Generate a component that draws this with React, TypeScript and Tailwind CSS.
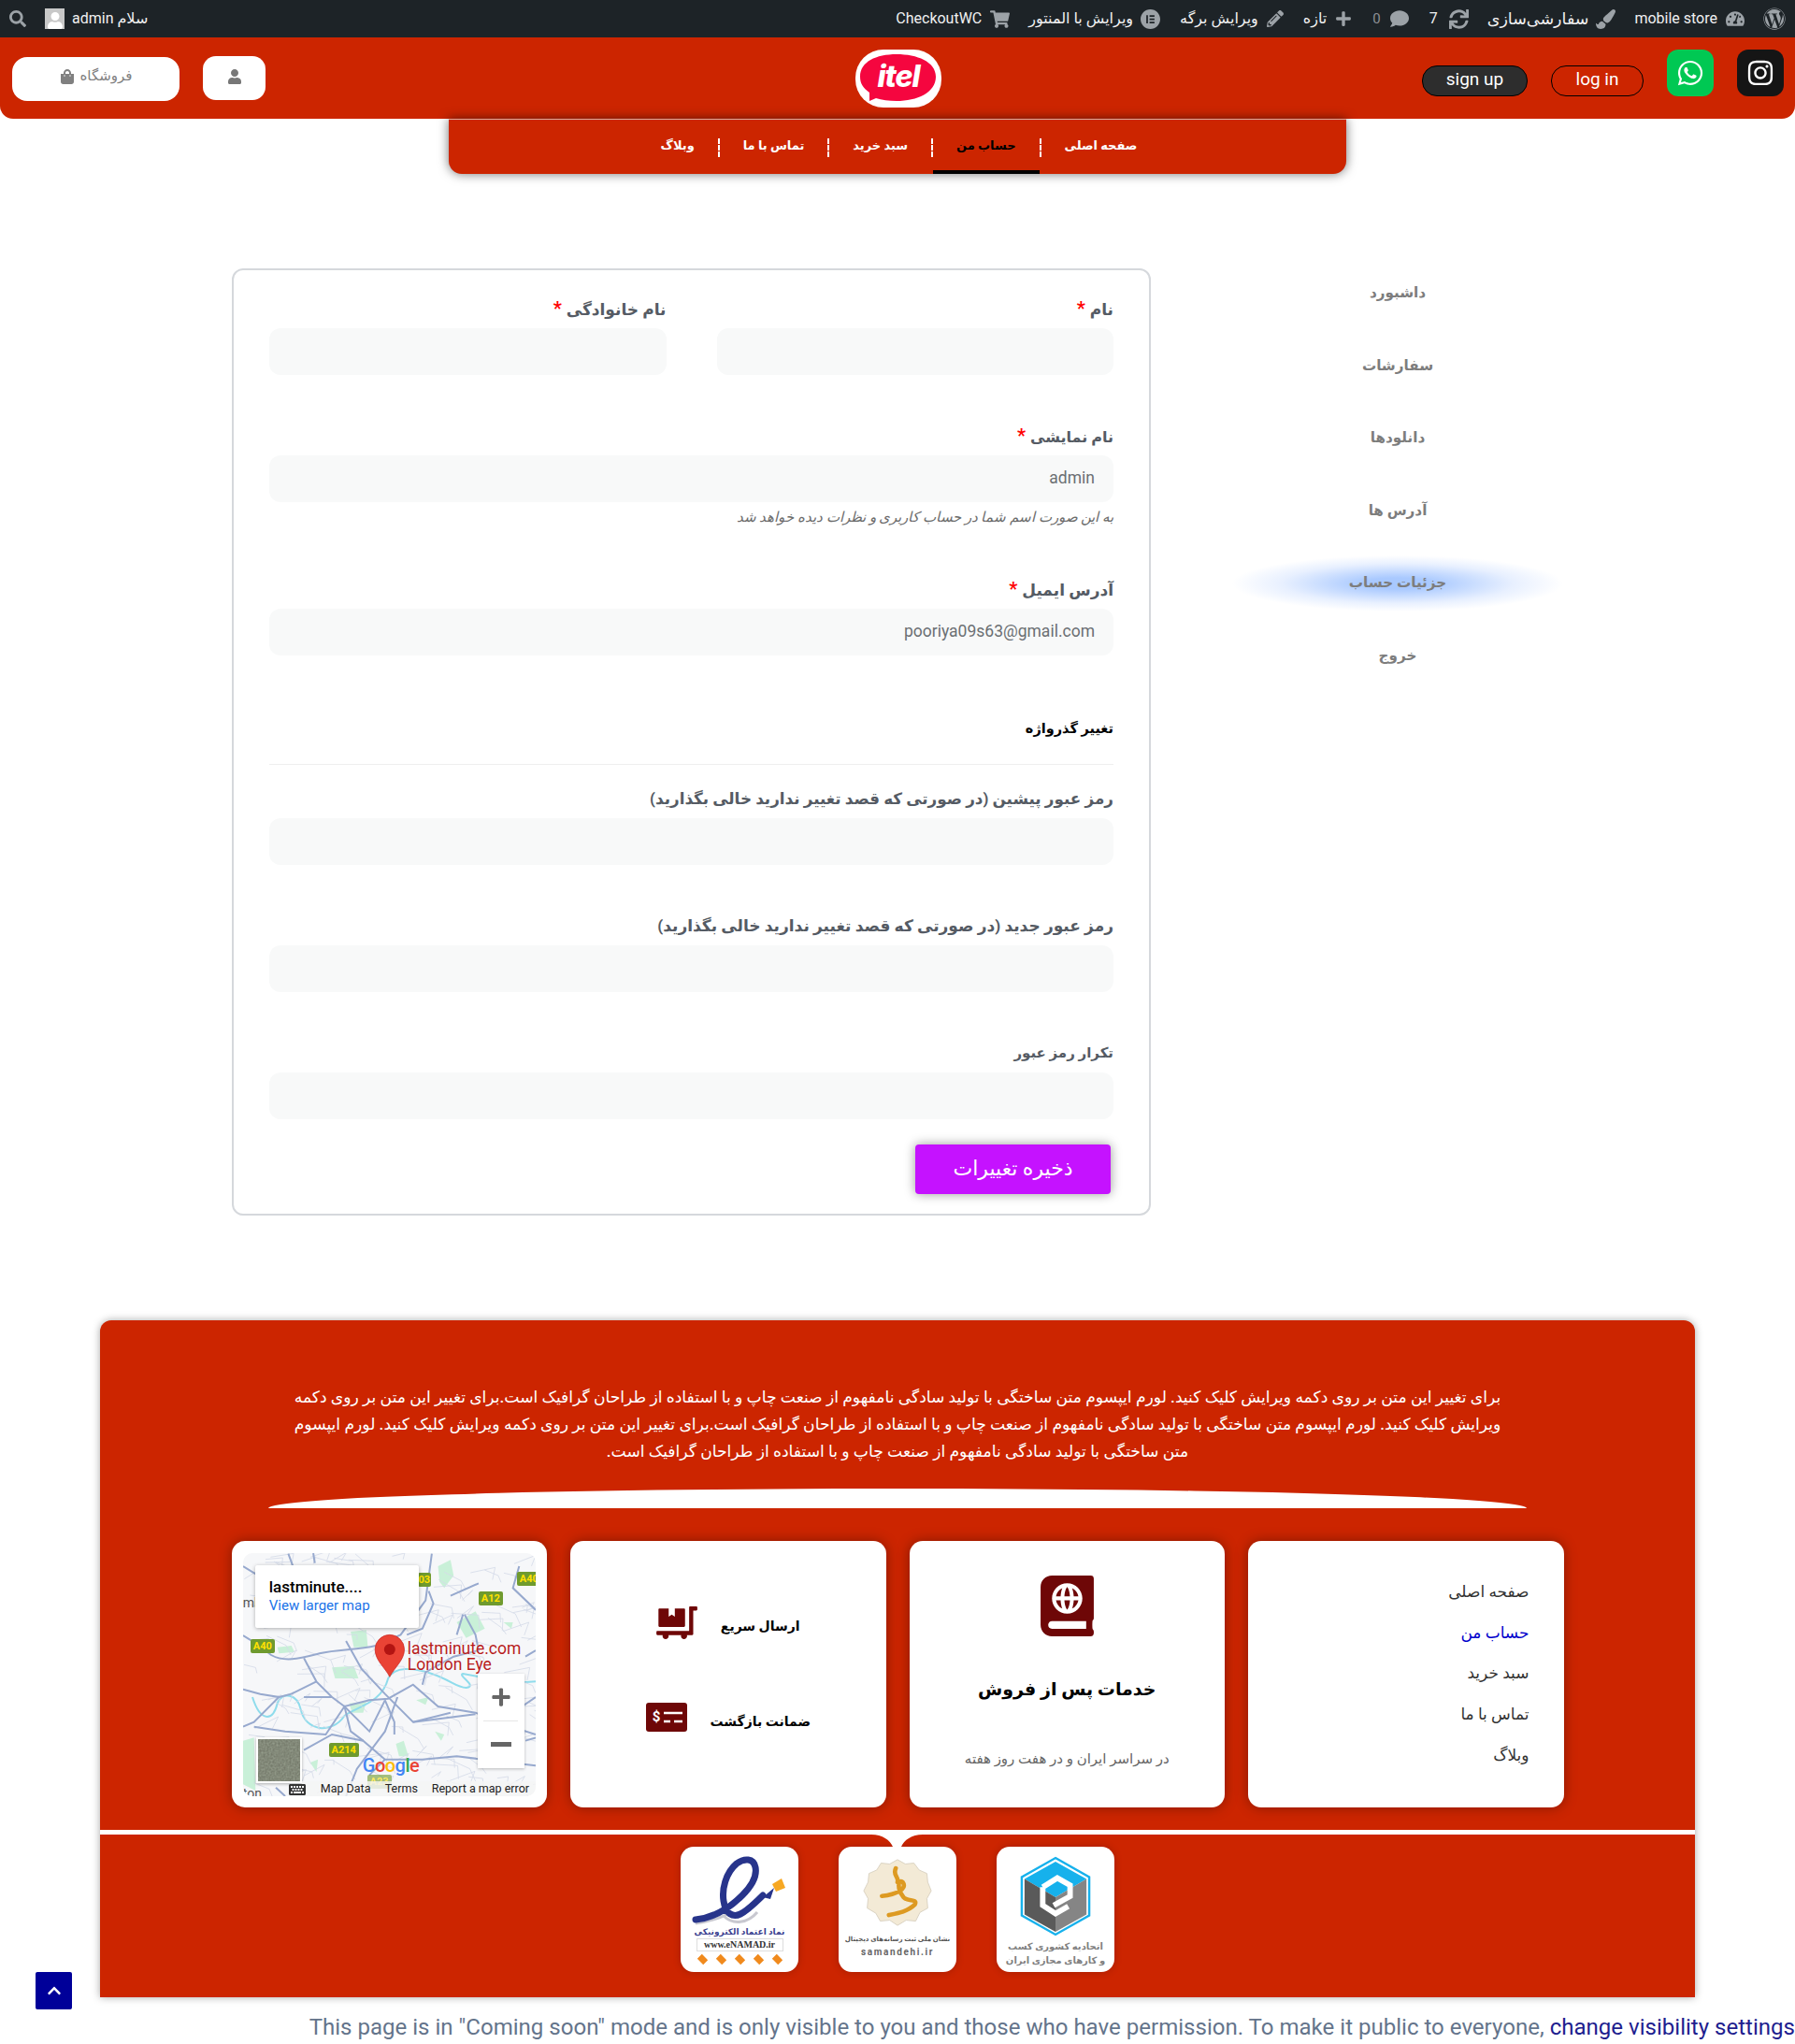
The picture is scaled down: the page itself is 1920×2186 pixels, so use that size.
import React from "react";
import { FaWordpress, FaTachometerAlt, FaPaintBrush, FaSync, FaComment, FaPlus, FaPencilAlt, FaShoppingCart, FaSearch, FaWhatsapp, FaInstagram, FaShoppingBag, FaUser, FaAtlas, FaDollyFlatbed, FaKeyboard, FaChevronUp } from "react-icons/fa";
import { SiElementor } from "react-icons/si";

const FONT = "font-['Roboto','DejaVu_Sans',sans-serif]";

function AdminItem({ icon, text, cls = "" }: { icon: React.ReactNode; text?: string; cls?: string }) {
  return (
    <div className={"flex items-center gap-[9px] text-[16px] text-[#f0f0f1] " + cls}>
      {text && <span className="whitespace-nowrap">{text}</span>}
      <span className="text-[#9ca2a7] flex items-center">{icon}</span>
    </div>
  );
}

function AdminBar() {
  return (
    <div className="h-10 bg-[#1d2327] flex items-center justify-between pl-[10px] pr-[10px]">
      <div className="flex items-center">
        <FaSearch className="text-[#9ca2a7] text-[18px]" />
        <div className="ml-[20px] w-[21px] h-[22px] bg-[#c8c8c8] flex items-end justify-center overflow-hidden">
          <FaUser className="text-white text-[18px]" />
        </div>
        <span className="ml-[8px] text-[16px] text-[#f0f0f1] whitespace-nowrap" dir="rtl">سلام admin</span>
      </div>
      <div className="flex items-center">
        <AdminItem text="CheckoutWC" icon={<FaShoppingCart className="text-[21px]" />} />
        <div className="ml-[20px] flex items-center gap-[8px] text-[16px] text-[#f0f0f1]">
          <span className="whitespace-nowrap" dir="rtl">ویرایش با المنتور</span>
          <SiElementor className="text-[#9ca2a7] text-[21px]" />
        </div>
        <AdminItem cls="ml-[21px]" text="ویرایش برگه" icon={<FaPencilAlt className="text-[18px]" />} />
        <AdminItem cls="ml-[21px]" text="تازه" icon={<FaPlus className="text-[18px]" />} />
        <div className="ml-[22px] flex items-center gap-[10px] text-[15px] text-[#8c8f94]">
          <span>0</span>
          <FaComment className="text-[#9ca2a7] text-[20px]" />
        </div>
        <div className="ml-[22px] flex items-center gap-[12px] text-[16px] text-[#f0f0f1]">
          <span>7</span>
          <FaSync className="text-[#9ca2a7] text-[21px]" />
        </div>
        <div className="ml-[20px] flex items-center gap-[8px] text-[17.5px] text-[#f0f0f1]">
          <span className="whitespace-nowrap">سفارشی‌سازی</span>
          <FaPaintBrush className="text-[#9ca2a7] text-[21px]" />
        </div>
        <AdminItem cls="ml-[20px]" text="mobile store" icon={<FaTachometerAlt className="text-[20px]" />} />
        <FaWordpress className="ml-[20px] text-[#9ca2a7] text-[24px]" />
      </div>
    </div>
  );
}

function Logo() {
  return (
    <svg viewBox="0 0 92 62" className="w-[94px] h-[62px]">
      <rect x="0" y="0" width="92" height="62" rx="30" ry="30" fill="#fff" />
      <path d="M44 5 C66 5 86 13 86 29 C86 46 66 55 44 55 C36 55 28 54 22 52 L15 55 L15 46 C8 41 5 36 5 29 C5 13 22 5 44 5Z" fill="#f5063f" />
      <text x="46" y="40" textAnchor="middle" fontFamily="Inter, Roboto, sans-serif" fontStyle="italic" fontWeight="800" fontSize="32" fill="#fff" letterSpacing="-1">itel</text>
    </svg>
  );
}

function Header() {
  return (
    <div className="h-[87px] bg-[#cc2500] rounded-b-[14px] grid grid-cols-[1fr_auto_1fr] items-start pl-[13px] pr-[12px]">
      <div className="flex items-start">
        <div className="mt-[21px] w-[179px] h-[47px] bg-white rounded-[16px] flex items-center justify-center gap-[6px] pb-[6px] text-[15px] text-[#808080]">
          <FaShoppingBag className="text-[16px]" />
          <span dir="rtl">فروشگاه</span>
        </div>
        <div className="mt-[20px] ml-[25px] w-[67px] h-[47px] bg-white rounded-[14px] flex items-center justify-center pb-[4px] text-[#777]">
          <FaUser className="text-[16px]" />
        </div>
      </div>
      <div className="mt-[13px]">
        <Logo />
      </div>
      <div className="flex items-start justify-end">
        <div className="mt-[30px] w-[113px] h-[33px] rounded-[16px] bg-[#2d2d2d] border border-black text-white text-[19px] pb-[3px] flex items-center justify-center">sign up</div>
        <div className="mt-[30px] ml-[25px] w-[99px] h-[33px] rounded-[16px] bg-[#cc2500] border border-black text-white text-[19px] pb-[3px] flex items-center justify-center">log in</div>
        <div className="mt-[13px] ml-[25px] w-[50px] h-[50px] rounded-[12px] bg-[#00c853] flex items-center justify-center text-white">
          <FaWhatsapp className="text-[30px]" />
        </div>
        <div className="mt-[13px] ml-[25px] w-[50px] h-[50px] rounded-[12px] bg-[#151515] flex items-center justify-center text-white">
          <FaInstagram className="text-[30px]" />
        </div>
      </div>
    </div>
  );
}

function Sep() {
  return <div className="h-[20px] border-l-2 border-dashed border-white mt-[20px] mb-[19px]" />;
}

function Nav() {
  const items = ["صفحه اصلی", "حساب من", "سبد خرید", "تماس با ما", "وبلاگ"];
  return (
    <div dir="rtl" className="relative z-10 w-[960px] mx-auto h-[59px] bg-[#cc2500] rounded-b-[14px] border-t border-[#d9a89c] shadow-[0_0_12px_rgba(0,0,0,0.55)] flex justify-center pl-[3px]">
      {items.map((t, i) => (
        <React.Fragment key={t}>
          {i > 0 && <Sep />}
          <div className={"h-full px-[25px] flex items-center text-[13px] font-bold whitespace-nowrap " + (i === 1 ? "text-black border-b-4 border-black pt-[2px]" : "text-white pb-[3px]")}>{t}</div>
        </React.Fragment>
      ))}
    </div>
  );
}

function Field({ label, req, value, top, cls = "", size = "text-[17px]" }: { label: string; req?: boolean; value?: string; top: string; cls?: string; size?: string }) {
  return (
    <div className={top + " " + cls}>
      <label className={"h-[28px] block leading-[28px] font-bold text-[#555b64] whitespace-nowrap " + size}>
        {label}
        {req && <span className="text-[#ff0000] text-[20px]"> *</span>}
      </label>
      <div dir="ltr" className="mt-[7px] h-[50px] rounded-[12px] bg-[#f8f9f9] flex items-center justify-end pr-[20px] pb-[2px] text-[17.5px] text-[#6b6f73]">{value}</div>
    </div>
  );
}

function Form() {
  return (
    <div className="mt-[12px] w-[983px] h-[1013px] border-2 border-[#d5d8dc] rounded-[12px] px-[38px] pt-[27px]">
      <div className="flex gap-[54px]">
        <Field label="نام" req top="" cls="w-[425px]" />
        <Field label="نام خانوادگی" req top="" cls="w-[425px]" />
      </div>
      <Field label="نام نمایشی" req value="admin" top="mt-[51px]" size="text-[16px]" />
      <div className="mt-[6px] h-[20px] leading-[20px] text-[15px] italic text-[#6c6c6c] whitespace-nowrap">به این صورت اسم شما در حساب کاربری و نظرات دیده خواهد شد</div>
      <Field label="آدرس ایمیل" req value="pooriya09s63@gmail.com" top="mt-[53px]" />
      <div className="mt-[65px] h-[28px] leading-[28px] text-[14.5px] font-bold text-black">تغییر گذرواژه</div>
      <div className="mt-[23px] h-px bg-[#eeeeee]" />
      <Field label="رمز عبور پیشین (در صورتی که قصد تغییر ندارید خالی بگذارید)" top="mt-[22px]" size="text-[16.8px]" />
      <Field label="رمز عبور جدید (در صورتی که قصد تغییر ندارید خالی بگذارید)" top="mt-[51px]" />
      <Field label="تکرار رمز عبور" top="mt-[51px]" size="text-[15px]" />
      <div className="mt-[27px] mr-[3px] w-[209px] h-[53px] rounded-[4px] bg-[#c512ff] shadow-[0_0_12px_rgba(0,0,0,0.4)] text-white text-[22px] flex items-center justify-center pb-[2px]">ذخیره تغییرات</div>
    </div>
  );
}

function Sidebar() {
  const items = ["داشبورد", "سفارشات", "دانلودها", "آدرس ها", "جزئیات حساب", "خروج"];
  return (
    <div className="ml-[87px] w-[354px] flex flex-col">
      {items.map((t, i) => (
        <div key={t} className={"h-[77.5px] flex items-center justify-center text-[15.2px] font-bold text-[#7d7d7d] " + (i === 4 ? "bg-[radial-gradient(closest-side,#a9c9ff_20%,#e8f0ff_70%,#ffffff00_100%)] bg-[length:100%_60px] bg-center bg-no-repeat" : "")}>{t}</div>
      ))}
    </div>
  );
}

function MapCanvas() {
  const minor: string[] = [];
  for (let i = 0; i < 190; i++) {
    const x = 15 + ((i * 197 + (i * i) % 89) % 938);
    const y = 18 + ((i * 311 + (i * i) % 61) % 780);
    const dx = 30 + ((i * 53) % 60);
    const dy = ((i * 71) % 80) - 40;
    minor.push(`M${x} ${y} L${x + dx} ${y + dy} L${x + dx + dy / 2} ${y + dy + dx / 2}`);
  }
  const main = [
    "M15 282 L60 310 L105 345 C150 370 200 355 260 340 C320 325 380 330 440 315 L520 280 L600 170 L620 20",
    "M210 355 L250 430 L300 480 L340 510 L420 490 L480 485 L560 440 L640 510 L760 530 L830 560 L953 600",
    "M15 455 L70 470 L130 480 L50 560 L15 575",
    "M50 575 L150 590 L280 600 L340 510 L420 590 L470 490",
    "M510 480 L470 590 L380 710 L345 798",
    "M345 300 L395 390 L470 470 L560 560 L680 530",
    "M160 20 L175 60 L240 100 L310 60 M240 18 L245 50",
    "M610 140 L625 180 L590 260 L540 280",
    "M725 215 L760 280 L770 330 L690 350 L600 400 L590 440",
    "M210 650 L300 600 L400 620 L470 680 L590 680 L700 670 L953 700",
    "M900 60 L880 130 L953 200 M680 155 L770 115",
    "M15 60 L80 100 M880 530 L953 480 M920 620 L953 610",
    "M470 490 L500 560 L500 600 M340 510 L360 590 L400 620 M560 560 L760 535",
    "M210 480 L300 480 M250 430 L170 470 L130 480 M720 215 L700 280",
    "M470 680 L420 730 M120 770 L150 798 M920 350 L953 330",
  ];
  return (
    <svg viewBox="15 18 938 780" preserveAspectRatio="none" className="absolute inset-0 w-full h-full">
      <rect x="15" y="18" width="938" height="780" fill="#f6f7f9" />
      <g fill="#c9f0d8">
        <path d="M360 270 L410 265 L415 320 L370 320Z" />
        <path d="M300 385 L370 380 L385 420 L310 420Z" />
        <path d="M640 60 L680 40 L690 90 L660 130 L645 110Z" />
        <path d="M700 240 L760 205 L790 260 L730 290Z" />
        <path d="M355 500 L410 495 L400 530 L365 530Z" />
        <path d="M15 620 L50 610 L55 780 L15 760Z" />
        <path d="M125 320 L170 315 L180 335 L130 340Z" />
        <path d="M505 630 L530 620 L545 670 L515 670Z" />
        <path d="M630 590 L660 600 L650 620Z" />
        <path d="M230 690 L255 680 L250 720Z" />
        <path d="M850 240 L880 240 L875 260Z" />
        <path d="M570 490 L610 480 L600 505Z" />
      </g>
      <path d="M45 480 C70 560 110 560 125 500 C140 460 190 470 200 520 C215 590 300 600 340 540 C380 510 460 500 480 420 C500 380 560 385 620 405 C680 425 700 450 730 450 C770 445 700 410 720 405 L880 435 L953 430" fill="none" stroke="#8fdcec" strokeWidth="6" />
      <g fill="none" stroke="#d5dbe8" strokeWidth="2.5">
        {minor.map((d, i) => <path key={i} d={d} />)}
      </g>
      <g fill="none" stroke="#97a9ce" strokeWidth="6">
        {main.map((d, i) => <path key={i} d={d} />)}
      </g>
      <path d="M485 415 C470 385 438 362 438 327 A47 47 0 0 1 532 327 C532 362 500 385 485 415Z" fill="#ea4335" stroke="#c5221f" strokeWidth="2" />
      <circle cx="485" cy="327" r="18" fill="#b31412" />
    </svg>
  );
}

function Shield({ t, cls }: { t: string; cls: string }) {
  return <div className={"absolute h-[15px] rounded-[2px] bg-[#6f9a2e] text-[#ffe100] text-[11px] font-bold leading-[15px] text-center " + cls}>{t}</div>;
}

function MapBox() {
  return (
    <div dir="ltr" className="relative w-[313px] h-[260px] rounded-[10px] overflow-hidden font-['Roboto',sans-serif]">
      <MapCanvas />
      <div className="absolute left-0 top-[46px] text-[14px] text-[#555] leading-none">mb</div>
      <div className="absolute left-0 top-[250px] text-[14px] text-[#555] leading-none">ton</div>
      <Shield t="03" cls="left-[187px] top-[21px] w-[14px] overflow-hidden" />
      <Shield t="A12" cls="left-[252px] top-[41px] w-[26px]" />
      <Shield t="A40" cls="left-[293px] top-[20px] w-[26px]" />
      <Shield t="A40" cls="left-[8px] top-[92px] w-[26px]" />
      <Shield t="A214" cls="left-[92px] top-[203px] w-[32px]" />
      <Shield t="A23" cls="left-[133px] top-[237px] w-[26px] opacity-60" />
      <div className="absolute left-[13px] top-[13px] w-[175px] h-[67px] bg-white rounded-[2px] shadow-[0_1px_4px_rgba(0,0,0,0.3)] pl-[15px] pt-[12px]">
        <div className="text-[17px] leading-[22px] font-medium text-black">lastminute....</div>
        <div className="text-[15px] leading-[18px] text-[#1a73e8]">View larger map</div>
      </div>
      <div className="absolute left-[176px] top-[94px] text-[17.5px] leading-[17px] text-[#b71c1c] [text-shadow:0_0_2px_#fff]">lastminute.com<br />London Eye</div>
      <div className="absolute left-[251px] top-[129px] w-[50px] h-[101px] bg-white shadow-[0_1px_3px_rgba(0,0,0,0.25)] flex flex-col items-center text-[#666]">
        <div className="h-[50px] flex items-center justify-center"><FaPlus className="text-[22px]" /></div>
        <div className="w-[37px] h-px bg-[#e6e6e6]" />
        <div className="h-[50px] flex items-center justify-center"><div className="w-[22px] h-[5px] bg-[#666]" /></div>
      </div>
      <div className="absolute left-[14px] top-[197px] w-[49px] h-[49px] border-2 border-white bg-[#6d7260] shadow-[0_1px_3px_rgba(0,0,0,0.3)] overflow-hidden">
        <svg className="w-full h-full">
          <filter id="sat"><feTurbulence type="fractalNoise" baseFrequency="0.5" numOctaves="3" /><feColorMatrix values="0 0 0 0 0.32 0 0 0 0 0.36 0 0 0 0 0.28 0 0 0 1.4 -0.35" /></filter>
          <rect width="100%" height="100%" fill="#767b6c" />
          <rect width="100%" height="100%" filter="url(#sat)" />
        </svg>
      </div>
      <div className="absolute left-[128px] top-[215px] text-[20px] leading-[24px] font-medium tracking-[-0.5px]">
        <span className="text-[#4285f4]">G</span><span className="text-[#ea4335]">o</span><span className="text-[#fbbc05]">o</span><span className="text-[#4285f4]">g</span><span className="text-[#34a853]">l</span><span className="text-[#ea4335]">e</span>
      </div>
      <div className="absolute left-[63px] right-0 bottom-0 h-[16px] bg-[#f5f5f5cc]" />
      <FaKeyboard className="absolute left-[49px] top-[244px] text-[18px] text-[#333]" />
      <div className="absolute left-[83px] top-[245px] text-[12.5px] leading-[14px] text-[#222] whitespace-nowrap">Map Data</div>
      <div className="absolute left-[152px] top-[245px] text-[12.5px] leading-[14px] text-[#222] whitespace-nowrap">Terms</div>
      <div className="absolute left-[202px] top-[245px] text-[12.5px] leading-[14px] text-[#222] whitespace-nowrap">Report a map error</div>
    </div>
  );
}

function Cards() {
  const card = "h-[285px] w-[337.5px] bg-white rounded-[14px] shadow-[0_0_14px_rgba(0,0,0,0.35)]";
  const links = ["صفحه اصلی", "حساب من", "سبد خرید", "تماس با ما", "وبلاگ"];
  return (
    <div dir="rtl" className="mt-[35px] flex justify-center gap-[25px]">
      <div className={card + " pr-[37px] pt-[33px]"}>
        {links.map((t, i) => (
          <div key={t} className={"h-[43.7px] flex items-center text-[17px] " + (i === 1 ? "text-[#0000cc]" : "text-[#333]")}>{t}</div>
        ))}
      </div>
      <div className={card + " flex flex-col items-center"}>
        <FaAtlas className="mt-[37px] w-[57px] h-[65px] text-[#6e0707]" />
        <div className="mt-[42px] text-[19px] leading-[30px] font-bold text-black">خدمات پس از فروش</div>
        <div className="mt-[49px] text-[15px] leading-[20px] text-[#666]">در سراسر ایران و در هفت روز هفته</div>
      </div>
      <div className={card + " flex flex-col items-center justify-center gap-[68px] pb-[12px]"}>
        <div className="flex items-center justify-center gap-[25px] h-[35px]">
          <span className="text-[14px] font-bold text-black mt-[8px]">ارسال سریع</span>
          <FaDollyFlatbed className="w-[44px] h-[35px] text-[#6e0707] -scale-x-100" />
        </div>
        <div className="flex items-center justify-center gap-[25px] h-[31px]">
          <span className="text-[14px] font-bold text-black mt-[11px]">ضمانت بازگشت</span>
          <svg viewBox="0 0 44 31" className="w-[44px] h-[31px]">
            <rect width="44" height="31" rx="3" fill="#6e0707" />
            <text x="11" y="20" textAnchor="middle" fontSize="15" fontWeight="700" fill="#fff" fontFamily="Roboto, sans-serif">$</text>
            <path d="M19 11 H39 M19 20 H26 M30 20 H39" stroke="#fff" strokeWidth="2.5" />
          </svg>
        </div>
      </div>
      <div className={card + " flex items-center justify-center"}>
        <MapBox />
      </div>
    </div>
  );
}

function Badge({ children }: { children: React.ReactNode }) {
  return <div className="w-[126px] h-[134px] rounded-[14px] bg-white shadow-[0_0_8px_rgba(0,0,0,0.2)] flex flex-col items-center overflow-hidden">{children}</div>;
}

function Badges() {
  return (
    <div dir="ltr" className="mt-[13px] flex justify-center gap-[43px]">
      <Badge>
        <svg viewBox="0 0 126 85" className="w-[126px] h-[85px]">
          <path d="M16 82 C30 80 44 76 54 70 M46 74 C56 84 72 82 82 70" fill="none" stroke="#c8c8d0" strokeWidth="3" />
          <path d="M16 78 C36 76 52 66 66 52 C76 42 82 32 80 22 C78 12 68 12 60 18 C48 28 44 46 46 58 C48 72 56 76 64 72 C72 68 80 60 88 52" fill="none" stroke="#27348b" strokeWidth="7" strokeLinecap="round" />
          <path d="M88 54 L100 44 L96 56Z" fill="#27348b" />
          <path d="M98 40 L108 34 L112 44 L102 48Z" fill="#f7a823" />
        </svg>
        <div dir="rtl" className="text-[9px] leading-[12px] text-[#3a3f8f] font-bold whitespace-nowrap">نماد اعتماد الکترونیکی</div>
        <div className="mt-[1px] w-[93px] h-[14px] border border-[#ddd] text-[10px] leading-[12px] text-center font-bold text-[#333] font-['Liberation_Serif',serif]">www.eNAMAD.ir</div>
        <div className="mt-[5px] flex gap-[11px]">
          {[0, 1, 2, 3, 4].map((i) => <div key={i} className="w-[9px] h-[7px] rotate-45 bg-[#f08a1d]" />)}
        </div>
      </Badge>
      <Badge>
        <svg viewBox="0 0 80 80" className="mt-[12px] w-[74px] h-[74px]">
          <path d="M40 2 L49 7 L59 6 L65 14 L74 18 L75 28 L79 38 L74 47 L75 58 L66 63 L61 73 L50 72 L40 78 L31 72 L20 73 L15 64 L5 58 L6 47 L1 38 L6 28 L7 18 L16 14 L21 6 L31 7Z" fill="#f3ead6" stroke="#d8d0c0" />
          <path d="M38 12 C34 20 42 22 40 28 M22 44 C38 42 52 36 46 28 C40 24 40 36 46 44 C50 52 64 46 60 54 C52 62 40 64 30 66" fill="none" stroke="#dd9a22" strokeWidth="5" strokeLinecap="round" />
        </svg>
        <div dir="rtl" className="mt-[8px] text-[7px] leading-[10px] font-bold text-[#555] whitespace-nowrap">نشان ملی ثبت رسانه‌های دیجیتال</div>
        <div className="mt-[2px] text-[10px] leading-[14px] font-bold tracking-[1.6px] text-[#666]">samandehi.ir</div>
      </Badge>
      <Badge>
        <svg viewBox="0 0 80 88" className="mt-[10px] w-[78px] h-[86px]">
          <path d="M40 2 L77 23 L77 65 L40 86 L3 65 L3 23Z" fill="#fff" stroke="#16b1ec" strokeWidth="2.5" />
          <path d="M40 6 L74 25 L40 45 L6 25Z" fill="#16b1ec" />
          <path d="M6 25 L40 45 L40 83 L6 64Z" fill="#5a5a5a" />
          <path d="M74 25 L40 45 L40 83 L74 64Z" fill="#858585" />
          <path d="M26 34 L26 54 L40 63 L54 55 M26 34 L42 24 L56 32 L56 44 L38 54" fill="none" stroke="#fff" strokeWidth="6" />
        </svg>
        <div dir="rtl" className="mt-[3px] text-[10px] leading-[15px] font-bold text-[#808080] text-center whitespace-nowrap">اتحادیه کشوری کسب<br />و کارهای مجازی ایران</div>
      </Badge>
    </div>
  );
}

function Footer() {
  return (
    <div className="mt-[112px] mx-[107px] h-[724px] bg-[#cc2500] rounded-t-[12px] shadow-[0_0_8px_rgba(0,0,0,0.35)] pt-[68px] flex flex-col">
      <p dir="rtl" className="text-center text-white text-[17.15px] leading-[29px] font-medium whitespace-nowrap">
        برای تغییر این متن بر روی دکمه ویرایش کلیک کنید. لورم ایپسوم متن ساختگی با تولید سادگی نامفهوم از صنعت چاپ و با استفاده از طراحان گرافیک است.برای تغییر این متن بر روی دکمه<br />
        ویرایش کلیک کنید. لورم ایپسوم متن ساختگی با تولید سادگی نامفهوم از صنعت چاپ و با استفاده از طراحان گرافیک است.برای تغییر این متن بر روی دکمه ویرایش کلیک کنید. لورم ایپسوم<br />
        متن ساختگی با تولید سادگی نامفهوم از صنعت چاپ و با استفاده از طراحان گرافیک است.
      </p>
      <div className="mt-[25px] mx-auto w-[1346px] h-[21px] bg-white rounded-t-[50%_100%]" />
      <Cards />
      <div className="mt-[24px] h-[5px] bg-white relative">
        <svg viewBox="0 0 55 13" className="absolute left-[825px] top-[5px] w-[55px] h-[13px]">
          <path d="M0 0 C12 0 20 6 23 13 L32 13 C35 6 43 0 55 0Z" fill="#fff" />
        </svg>
      </div>
      <Badges />
    </div>
  );
}

export default function App() {
  return (
    <div className={"relative w-[1920px] h-[2186px] overflow-hidden bg-white " + FONT}>
      <AdminBar />
      <Header />
      <Nav />
      <div dir="rtl" className="pt-[89px] pr-[248px] flex">
        <Sidebar />
        <Form />
      </div>
      <Footer />
      <div className="pt-[14px] h-[50px] text-right text-[24.05px] leading-[36px] text-[#64748b] whitespace-nowrap">
        This page is in "Coming soon" mode and is only visible to you and those who have permission. To make it public to everyone, <span className="text-[#1e1e8f]">change visibility settings</span>
      </div>
      <div className="absolute left-[38px] top-[2109px] w-[39px] h-[40px] rounded-[2px] bg-[#000099] flex items-center justify-center text-white">
        <FaChevronUp className="text-[16px]" />
      </div>
    </div>
  );
}
